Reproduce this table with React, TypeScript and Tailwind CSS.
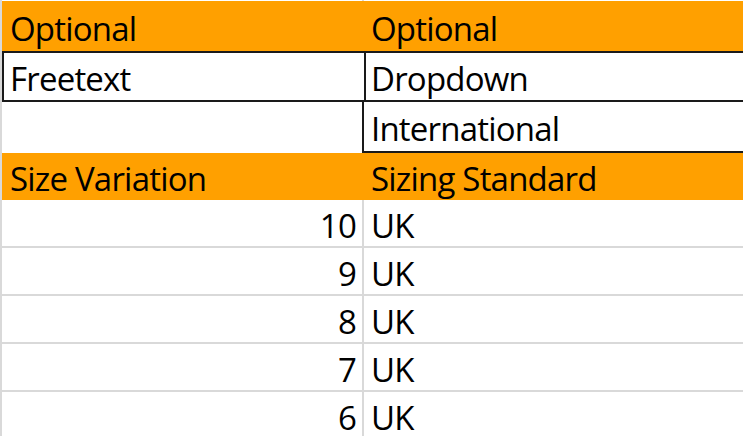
import React from 'react';

const ORANGE = 'bg-[#ffa000]';

const sizes = [10, 9, 8, 7, 6];

const App: React.FC = () => {
  return (
    <div
      className="w-[743px] h-[436px] overflow-hidden bg-white text-black text-[33px] leading-none tracking-[-0.8px]"
      style={{ fontFamily: '"Open Sans", "Noto Sans", sans-serif' }}
    >
      <div className="w-[900px] border-l-2 border-[#d9d9d9]">
        {/* sliver of the row above */}
        <div className="flex h-[1px]">
          <div className="w-[360px]" />
          <div className="flex-1 border-l-2 border-[#d9d9d9]" />
        </div>

        {/* Optional / Optional */}
        <div className={`flex h-[50px] ${ORANGE}`}>
          <div className="w-[362px] flex items-center pl-2 pt-1">Optional</div>
          <div className="flex-1 flex items-center pl-[7px] pt-1">Optional</div>
        </div>

        {/* Freetext / Dropdown */}
        <div className="flex h-[51px] border-y-2 border-[#1a1a1a]">
          <div className="w-[362px] flex items-center pl-[6px] pt-1 border-l-2 border-[#1a1a1a]">Freetext</div>
          <div className="flex-1 flex items-center pl-[5px] pt-1 border-l-2 border-[#1a1a1a]">Dropdown</div>
        </div>

        {/* empty / International */}
        <div className="flex h-[51px]">
          <div className="w-[360px]" />
          <div className="flex-1 flex items-center pl-[7px] pt-1 border-l-2 border-b-2 border-[#1a1a1a]">International</div>
        </div>

        {/* Size Variation / Sizing Standard */}
        <div className={`flex h-[47px] ${ORANGE}`}>
          <div className="w-[362px] flex items-center pl-2 pt-1">Size Variation</div>
          <div className="flex-1 flex items-center pl-[7px] pt-1">Sizing Standard</div>
        </div>

        {sizes.map((s) => (
          <div key={s} className="flex h-[48px] border-b-2 border-[#d9d9d9]">
            <div className="w-[360px] flex items-center justify-end pr-[6px] pt-1">{s}</div>
            <div className="flex-1 flex items-center pl-[7px] pt-1 border-l-2 border-[#d9d9d9]">UK</div>
          </div>
        ))}
      </div>
    </div>
  );
};

export default App;
